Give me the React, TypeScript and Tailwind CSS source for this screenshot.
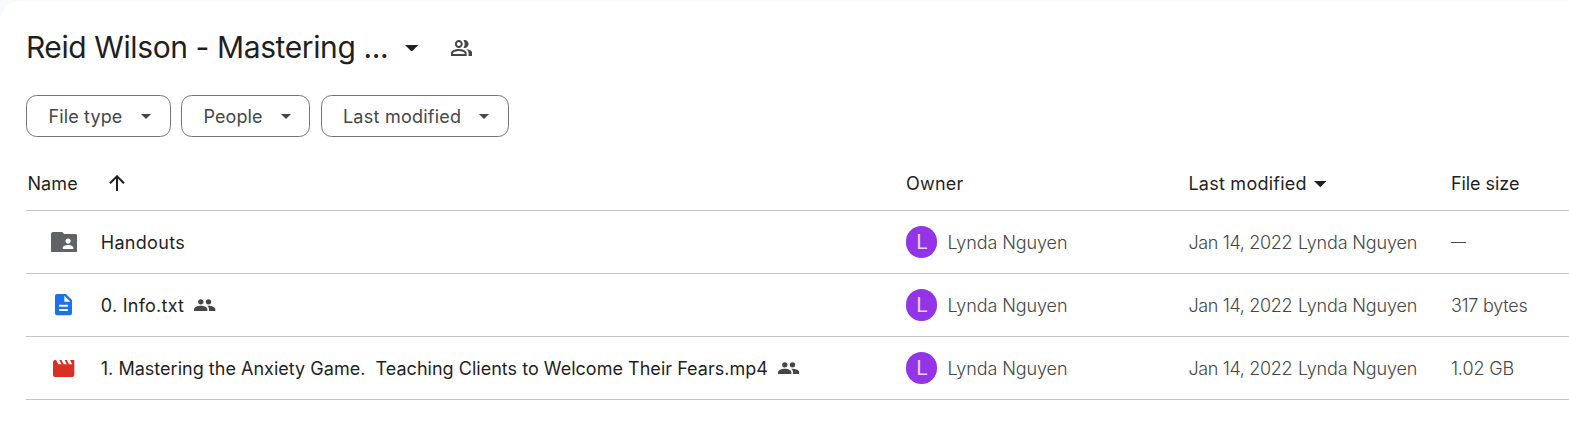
import type { ReactNode } from "react";

function Caret({ className }: { className: string }) {
  return (
    <svg viewBox="0 0 10 5" className={className} fill="currentColor">
      <path d="M0 0h10L5 5z" />
    </svg>
  );
}

function PeopleOutline() {
  return (
    <svg viewBox="1 4 22 16" preserveAspectRatio="none" className="h-4 w-[21.5px] text-[#444746]" fill="currentColor">
      <path d="M16.67 13.13C18.04 14.06 19 15.32 19 17v3h4v-3c0-2.18-3.57-3.47-6.33-3.87zM15 12c2.21 0 4-1.79 4-4s-1.79-4-4-4c-.47 0-.91.1-1.33.24C14.5 5.27 15 6.58 15 8s-.5 2.73-1.33 3.76c.42.14.86.24 1.33.24zM9 12c2.21 0 4-1.79 4-4s-1.79-4-4-4-4 1.79-4 4 1.79 4 4 4zm0-6c1.1 0 2 .9 2 2s-.9 2-2 2-2-.9-2-2 .9-2 2-2zM9 13c-2.67 0-8 1.34-8 4v3h16v-3c0-2.66-5.33-4-8-4zm6 5H3v-.99C3.2 16.29 6.3 15 9 15s5.8 1.29 6 2v1z" />
    </svg>
  );
}

function PeopleFilled() {
  return (
    <svg viewBox="0 0 64 36" className="h-3 w-[21.33px] text-[#444746]" fill="currentColor">
      <circle cx="20.5" cy="8.5" r="8" />
      <circle cx="43.5" cy="8.5" r="8" />
      <path d="M0 36v-5.500C0 24 11 20 20.500 20S40 24 40 30.500V36z" />
      <path d="M45 36v-5.500c0-4.500-2-7.500-5-10 1.500-.4 2.800-.5 4-.5 9.500 0 20 4 20 10.500V36z" />
    </svg>
  );
}

function FolderIcon() {
  return (
    <svg viewBox="2 4 20 16" preserveAspectRatio="none" className="h-[20.8px] w-[26.3px] text-[#5f6368]" fill="currentColor">
      <path d="M20.500 5.600H12L10.500 4H3.500C2.700 4 2 4.700 2 5.500v13c0 .8.700 1.500 1.500 1.500h17c.8 0 1.500-.7 1.500-1.500V7.100c0-.8-.7-1.500-1.500-1.500zM15 9c1.100 0 2 .9 2 2s-.9 2-2 2-2-.9-2-2 .9-2 2-2zm4 8h-8v-1c0-1.330 2.670-2 4-2s4 .67 4 2z" />
    </svg>
  );
}

function DocIcon() {
  return (
    <svg viewBox="0 0 51 64" className="h-[21.33px] w-[17px] text-[#1a73e8]" fill="currentColor">
      <path fillRule="evenodd" d="M6 0h27l18 18v40a6 6 0 0 1-6 6H6a6 6 0 0 1-6-6V6a6 6 0 0 1 6-6zM28 5v18h18zM12.500 32v6h26v-6zm0 13v6h26v-6z" />
    </svg>
  );
}

function MovieIcon() {
  return (
    <svg viewBox="0 0 64 51" className="h-[17px] w-[21.33px] text-[#d93025]" fill="currentColor">
      <path d="M51 0l6.500 13h-9.500L41.500 0H35l6.500 13H32L25.500 0H19l6.500 13H16L9.500 0H6a6 6 0 0 0-6 6v39a6 6 0 0 0 6 6h52a6 6 0 0 0 6-6V0z" />
    </svg>
  );
}

function Chip({ label, className, labelClass }: { label: string; className: string; labelClass: string }) {
  return (
    <button className={`flex h-[42px] items-center justify-between rounded-[10.67px] border border-[#747775] pr-[18.5px] pl-[21px] text-[18px] font-normal text-[#444746] ${className}`}>
      <span className={labelClass}>{label}</span>
      <Caret className="h-[5px] w-[10px]" />
    </button>
  );
}

type FileRow = {
  name: string;
  nameClass: string;
  icon: ReactNode;
  shared: boolean;
  size: string;
  sizeClass: string;
};

const files: FileRow[] = [
  { name: "Handouts", nameClass: "tracking-[0.3px]", icon: <FolderIcon />, shared: false, size: "—", sizeClass: "text-[15px]" },
  { name: "0. Info.txt", nameClass: "tracking-[0.25px]", icon: <DocIcon />, shared: true, size: "317 bytes", sizeClass: "tracking-[-0.25px]" },
  {
    name: "1. Mastering the Anxiety Game.  Teaching Clients to Welcome Their Fears.mp4",
    nameClass: "tracking-[0.02px]",
    icon: <MovieIcon />,
    shared: true,
    size: "1.02 GB",
    sizeClass: "tracking-[-0.1px]",
  },
];

const columns = "grid grid-cols-[879.6px_282.4px_261.5px_1fr] items-center border-b border-[#c4c7c5]";

export default function App() {
  return (
    <div className="h-[428px] w-full overflow-hidden bg-[#f8fafd] pt-px font-['Inter',sans-serif] text-[18px] whitespace-pre text-[#1f1f1f]">
      <main className="flex h-full flex-col rounded-tl-[21px] bg-white pl-[26.4px]">
        <header className="flex h-[94px] items-center">
          <h1 className="-ml-[0.5px] w-[379.6px] pb-[2px] text-[30px] font-normal leading-[40px] tracking-[-0.4px]">Reid Wilson - Mastering ...</h1>
          <Caret className="h-[6.7px] w-[13.3px]" />
          <div className="ml-8">
            <PeopleOutline />
          </div>
        </header>
        <div className="flex gap-[10.5px]">
          <Chip label="File type" className="w-[144.5px]" labelClass="tracking-[0.15px]" />
          <Chip label="People" className="w-[129px]" labelClass="tracking-[0.1px]" />
          <Chip label="Last modified" className="w-[188px]" labelClass="tracking-[0.25px]" />
        </div>
        <div className={`mt-[18px] h-[56px] pt-[2px] font-normal ${columns}`}>
          <div className="flex items-center">
            <span className="w-[82.4px] pl-[1px] tracking-[0.1px]">Name</span>
            <svg viewBox="0 0 16 16" className="mb-[2px] size-4" fill="none" stroke="currentColor" strokeWidth="2">
              <path d="M8 16V1.500M1 8.300l7-7 7 7" />
            </svg>
          </div>
          <span className="tracking-[0.2px]">Owner</span>
          <div className="flex items-center">
            <span className="w-[125.5px] tracking-[0.25px]">Last modified</span>
            <Caret className="mt-[2px] h-[6.3px] w-[12.6px]" />
          </div>
          <span className="pl-[1px] tracking-[-0.05px]">File size</span>
        </div>
        {files.map((file) => (
          <div key={file.name} className={`h-[63px] ${columns}`}>
            <div className="flex items-center">
              <span className="flex w-[74.4px] justify-center pl-[0.6px]">{file.icon}</span>
              <span className={`font-normal ${file.nameClass}`}>{file.name}</span>
              {file.shared && (
                <span className="ml-[10px]">
                  <PeopleFilled />
                </span>
              )}
            </div>
            <div className="flex items-center text-[#444746]">
              <span className="flex h-8 w-[31.5px] items-center justify-center rounded-full bg-[#9334e6] pt-px pl-[0.5px] font-['Roboto',sans-serif] text-[21px] text-[#e9d2fd]">L</span>
              <span className="ml-[10px] font-light tracking-[-0.1px]">Lynda Nguyen</span>
            </div>
            <div className="flex font-light text-[#444746]">
              <span className="w-[109.5px] tracking-[-0.35px]">Jan 14, 2022</span>
              <span className="tracking-[-0.15px]">Lynda Nguyen</span>
            </div>
            <span className={`pl-[1px] font-light text-[#444746] ${file.sizeClass}`}>{file.size}</span>
          </div>
        ))}
      </main>
    </div>
  );
}
